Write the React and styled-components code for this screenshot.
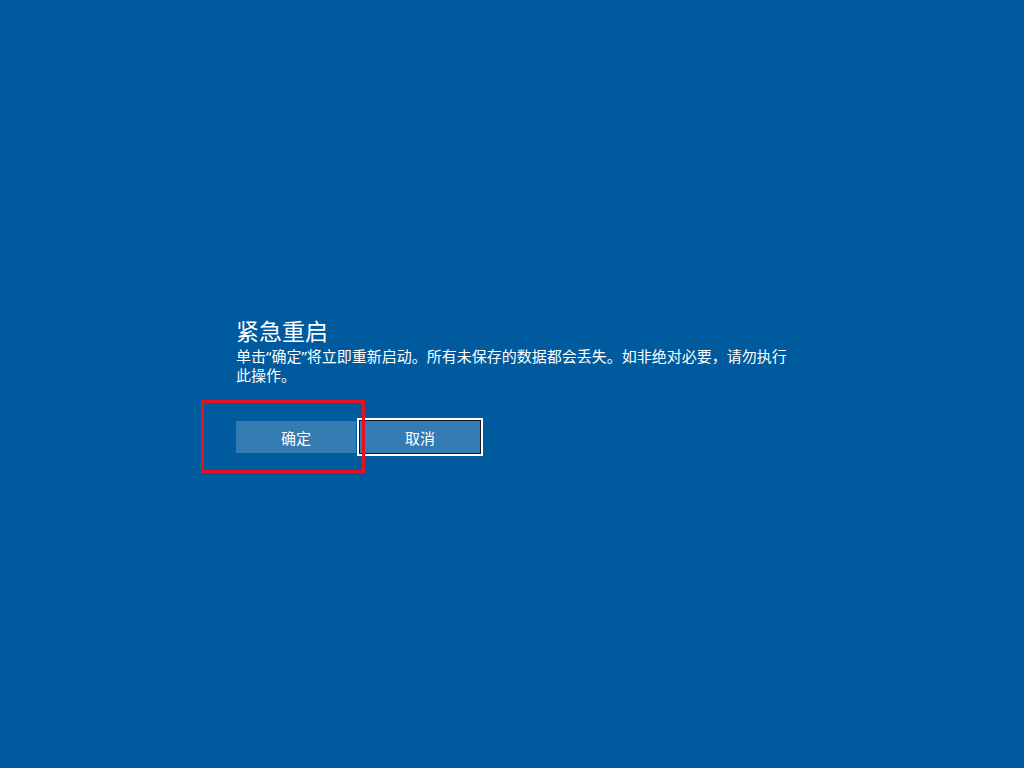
import styled, { createGlobalStyle } from "styled-components";

const GlobalStyle = createGlobalStyle`
  html, body {
    margin: 0;
    padding: 0;
    background-color: #005a9e;
  }
`;

const Screen = styled.div`
  width: 1024px;
  height: 768px;
  background-color: #005a9e;
  color: #ffffff;
  font-family: "Noto Sans", "Noto Sans CJK SC", sans-serif;
  display: flex;
  flex-direction: column;
  padding: 316px 0 0 236px;
  box-sizing: border-box;
  overflow: hidden;
`;

const Title = styled.h1`
  margin: 0;
  font-size: 23px;
  font-weight: 400;
  line-height: 30px;
`;

const Message = styled.p`
  margin: 1px 0 0;
  width: 560px;
  font-size: 15px;
  line-height: 19px;
`;

const ButtonRow = styled.div`
  display: flex;
  gap: 4px;
  margin-top: 36px;
`;

const ButtonWrap = styled.div`
  position: relative;
`;

const Button = styled.button`
  width: 120px;
  height: 32px;
  border: none;
  padding: 0;
  margin: 0;
  background-color: rgba(255, 255, 255, 0.2);
  color: #ffffff;
  font-family: "Noto Sans", "Noto Sans CJK SC", sans-serif;
  font-size: 15px;
  cursor: pointer;
  box-shadow: ${(props) =>
    props.$focused ? "0 0 0 1px #0b1a2a, 0 0 0 3px #ffffff" : "none"};
`;

const Highlight = styled.div`
  position: absolute;
  left: -35px;
  top: -21px;
  width: 164px;
  height: 73px;
  border: 3px solid #e81123;
  box-sizing: border-box;
  pointer-events: none;
  z-index: 2;
`;

export default function App() {
  return (
    <>
      <GlobalStyle />
      <Screen>
        <Title>紧急重启</Title>
        <Message>
          单击“确定”将立即重新启动。所有未保存的数据都会丢失。如非绝对必要，请勿执行此操作。
        </Message>
        <ButtonRow>
          <ButtonWrap>
            <Button>确定</Button>
            <Highlight />
          </ButtonWrap>
          <ButtonWrap>
            <Button $focused>取消</Button>
          </ButtonWrap>
        </ButtonRow>
      </Screen>
    </>
  );
}
